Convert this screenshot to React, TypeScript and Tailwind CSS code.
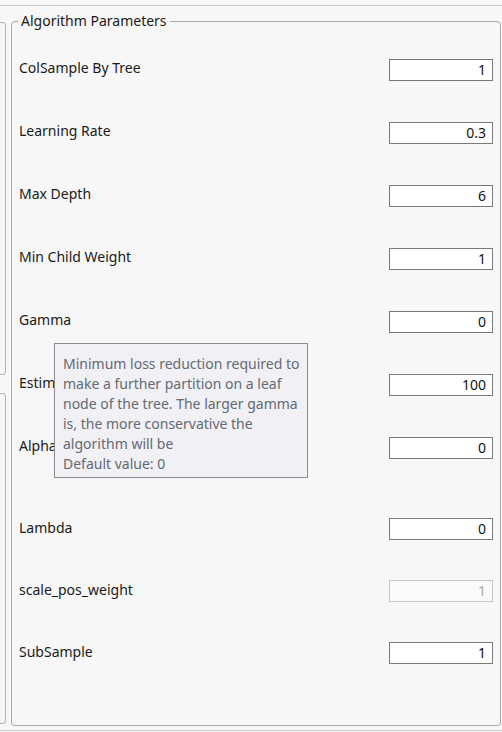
import React from "react";

const rowsA = [
  { label: "ColSample By Tree", value: "1" },
  { label: "Learning Rate", value: "0.3" },
  { label: "Max Depth", value: "6" },
  { label: "Min Child Weight", value: "1" },
  { label: "Gamma", value: "0" },
  { label: "Estimators", value: "100" },
  { label: "Alpha", value: "0" },
];

const rowsB = [
  { label: "Lambda", value: "0", disabled: false },
  { label: "scale_pos_weight", value: "1", disabled: true },
  { label: "SubSample", value: "1", disabled: false },
];

function Field({ value, disabled }: { value: string; disabled?: boolean }) {
  return (
    <div
      className={
        disabled
          ? "w-[104px] h-[22px] border border-[#c6c6c6] bg-[#fafafa] text-[#a8a8a8] text-right pr-[6px] text-[14px] leading-[20px]"
          : "w-[104px] h-[22px] border border-[#7a7a7a] bg-white text-[#111] text-right pr-[6px] text-[14px] leading-[20px]"
      }
    >
      {value}
    </div>
  );
}

export default function App() {
  return (
    <div
      className="w-[502px] h-[732px] bg-[#f7f7f7] pt-[5px] overflow-hidden relative text-[#1a1a1a]"
      style={{ fontFamily: '"Noto Sans", "Open Sans", sans-serif' }}
    >
      <div className="h-[726px] border-t border-b border-[#c9c9c9] flex">
        <div className="w-[6px] pt-[16px] flex flex-col gap-[18px]">
          <div className="h-[353px] border-y border-r border-[#b4b4b4] rounded-r-[4px]" />
          <div className="h-[331px] border-y border-r border-[#b4b4b4] rounded-r-[4px]" />
        </div>
        <fieldset className="ml-[5px] mt-[5px] w-[490px] h-[715px] border border-[#a9a9a9] rounded-[4px] pl-[6px] pr-[7px]">
          <legend className="px-[3px] text-[14px] leading-[20px] text-[#1a1a1a]">
            Algorithm Parameters
          </legend>
          <div className="pt-[7px] pl-[1px]">
            {rowsA.map((r) => (
              <div key={r.label} className="h-[63px] flex items-center justify-between">
                <span className="text-[14px] leading-[20px] mb-[3px]">{r.label}</span>
                <Field value={r.value} />
              </div>
            ))}
            <div className="h-[19px]" />
            {rowsB.map((r) => (
              <div key={r.label} className="h-[62px] flex items-center justify-between">
                <span className="text-[14px] leading-[20px] mb-[3px]">{r.label}</span>
                <Field value={r.value} disabled={r.disabled} />
              </div>
            ))}
          </div>
        </fieldset>
      </div>
      <div className="absolute left-[54px] top-[343px] w-[254px] h-[135px] border border-[#8c8c8c] bg-[#f0f0f5] pl-[8px] pt-[10px] text-[14px] leading-[20px] text-[#646a73] whitespace-nowrap">
        Minimum loss reduction required to
        <br />
        make a further partition on a leaf
        <br />
        node of the tree. The larger gamma
        <br />
        is, the more conservative the
        <br />
        algorithm will be
        <br />
        Default value: 0
      </div>
    </div>
  );
}
